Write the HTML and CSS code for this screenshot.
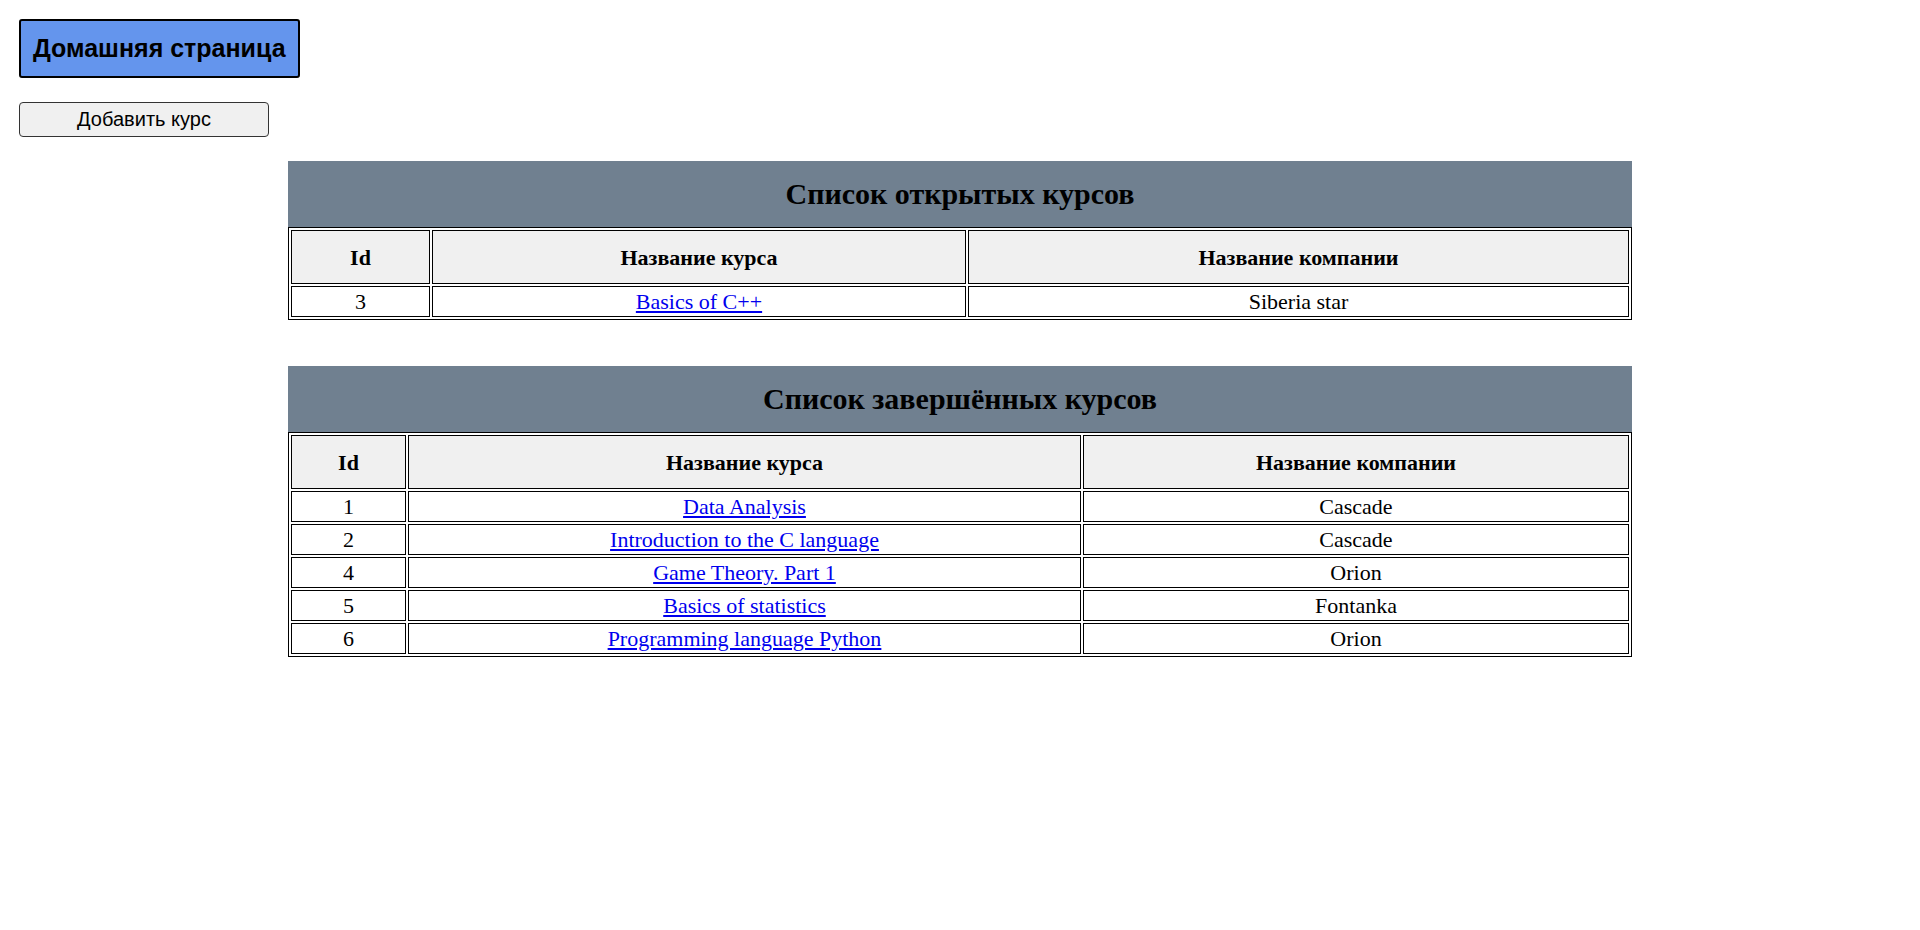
FILE: index.html
```html
<!DOCTYPE html>
<html lang="ru">
<head>
<meta charset="utf-8">
<title>Курсы</title>
<link rel="stylesheet" href="styles.css">
</head>
<body>
<div class="toolbar">
  <button class="home-btn" type="button">Домашняя страница</button>
  <button class="add-btn" type="button">Добавить курс</button>
</div>

<table class="courses courses-open">
  <caption>Список открытых курсов</caption>
  <thead>
    <tr><th class="col-id">Id</th><th class="col-name">Название курса</th><th>Название компании</th></tr>
  </thead>
  <tbody>
    <tr><td>3</td><td><a href="#">Basics of C++</a></td><td>Siberia star</td></tr>
  </tbody>
</table>

<table class="courses courses-done">
  <caption>Список завершённых курсов</caption>
  <thead>
    <tr><th class="col-id">Id</th><th class="col-name">Название курса</th><th>Название компании</th></tr>
  </thead>
  <tbody>
    <tr><td>1</td><td><a href="#">Data Analysis</a></td><td>Cascade</td></tr>
    <tr><td>2</td><td><a href="#">Introduction to the C language</a></td><td>Cascade</td></tr>
    <tr><td>4</td><td><a href="#">Game Theory. Part 1</a></td><td>Orion</td></tr>
    <tr><td>5</td><td><a href="#">Basics of statistics</a></td><td>Fontanka</td></tr>
    <tr><td>6</td><td><a href="#">Programming language Python</a></td><td>Orion</td></tr>
  </tbody>
</table>
</body>
</html>
```

FILE: styles.css
```css
body {
  margin: 0;
  font-family: "Liberation Serif", "Times New Roman", serif;
  background: #ffffff;
  color: #000000;
}

.toolbar {
  display: flex;
  flex-direction: column;
  align-items: flex-start;
  gap: 24px;
  padding: 19px 19px 0;
}

.home-btn {
  font-family: "Liberation Sans", Arial, sans-serif;
  font-size: 25px;
  font-weight: bold;
  color: #000;
  background: #6495ed;
  border: 2px solid #000;
  border-radius: 3px;
  height: 59px;
  padding: 0 12px;
  line-height: 29px;
}

.add-btn {
  font-family: "Liberation Sans", Arial, sans-serif;
  font-size: 20px;
  color: #000;
  background: #f0f0f0;
  border: 1px solid #333;
  border-radius: 4px;
  width: 250px;
  height: 35px;
  padding: 0 6px;
  line-height: 23px;
}

.courses {
  width: 70%;
  margin: 24px auto 0;
  table-layout: fixed;
  border-collapse: separate;
  border-spacing: 2px;
  border: 1px solid #000;
  font-size: 22px;
}

.courses-done {
  margin-top: 46px;
}

.courses caption {
  background: #708090;
  font-size: 30px;
  font-weight: bold;
  line-height: 34px;
  padding: 16px 0;
}

.courses th,
.courses td {
  box-sizing: border-box;
  border: 1px solid #000;
  text-align: center;
}

.courses th {
  background: #f0f0f0;
  padding: 14px 2px 13px;
  line-height: 25px;
  font-weight: bold;
}

.courses td {
  padding: 2px 2px;
  line-height: 25px;
}

.courses-open .col-id { width: 139px; }
.courses-open .col-name { width: 534px; }
.courses-done .col-id { width: 115px; }
.courses-done .col-name { width: 673px; }

.courses a {
  color: #0000ee;
}
```
